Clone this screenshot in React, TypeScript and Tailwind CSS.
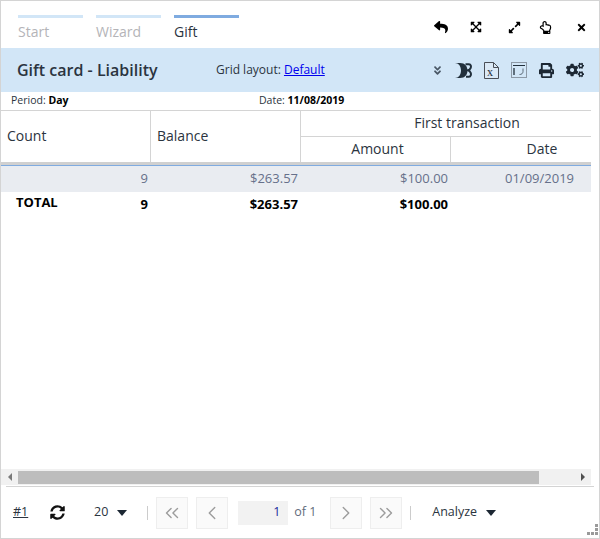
import {
  FaAngleDoubleDown,
  FaCogs,
  FaExpandAlt,
  FaExpandArrowsAlt,
  FaPrint,
  FaRegHandPointUp,
  FaReply,
  FaSyncAlt,
  FaTimes,
} from "react-icons/fa";
import { ChevronLeft, ChevronRight, ChevronsLeft, ChevronsRight } from "lucide-react";

/* tabs on top */
const tabs = [
  { label: "Start", active: false },
  { label: "Wizard", active: false },
  { label: "Gift", active: true },
];

function D3Icon() {
  return (
    <svg width="17" height="15" viewBox="0 0 17 15" fill="none" className="text-[#22303c]">
      <path d="M0 0h5c5 0 7.500 3.500 7.500 7.500S10 15 5 15H0c3.500 0 6-3 6-7.500S3.500 0 0 0z" fill="currentColor" />
      <path d="M10.500 1.300h3.500c2 0 2.200 2.200 1.700 3.500-.4 1-1.200 2-2.700 2.500 1.500.5 2.300 1.500 2.700 2.500.5 1.300.3 4-1.700 4h-3" stroke="currentColor" strokeWidth="2" />
    </svg>
  );
}

function ExcelIcon() {
  return (
    <svg width="15" height="17" viewBox="0 0 15 17" fill="none">
      <path d="M.5.5h9l5 5v11H.5z" fill="#dbe9f6" stroke="#4a4f57" />
      <path d="M9.500.5v5h5" stroke="#4a4f57" />
      <text x="3" y="14" fontSize="12" fontFamily="Liberation Serif, serif" fill="#22303c">x</text>
    </svg>
  );
}

function LayoutIcon() {
  return (
    <svg width="16" height="16" viewBox="0 0 16 16" fill="none">
      <rect x=".5" y=".5" width="15" height="15" fill="#d2e6f7" stroke="#8d99a6" />
      <path d="M2 3.500h12" stroke="#22303c" />
      <path d="M3 6v7" stroke="#22303c" strokeWidth="1.300" />
      <path d="M12 6.500v3c0 2-1.500 3-3.500 3" stroke="#5d6b78" />
    </svg>
  );
}

function Caret() {
  return <div className="h-0 w-0 border-x-[5px] border-t-[6px] border-x-transparent border-t-[#1c2733]" />;
}

function PagerButton({ children }: { children: React.ReactNode }) {
  return (
    <button className="flex h-8 w-8 items-center justify-center border border-[#eeeeee] bg-[#fafafa] text-[#9c9c9c]">
      {children}
    </button>
  );
}

export default function App() {
  return (
    <div
      className="flex h-[539px] w-[600px] flex-col border border-[#d4d4d4] bg-white text-[#2b3440]"
      style={{ fontFamily: '"Open Sans", sans-serif' }}
    >
      {/* tabs and window buttons */}
      <div className="flex h-[47px] shrink-0 pl-[17px] pt-[14px]">
        <div className="flex gap-[13px]">
          {tabs.map((t) => (
            <div key={t.label} className="w-[65px]">
              <div className={t.active ? "h-[3px] bg-[#7fabe0]" : "h-[3px] bg-[#d2e6f7]"} />
              <div className={t.active ? "mt-[4px] text-sm leading-[19px]" : "mt-[4px] text-sm leading-[19px] text-[#b4b4b8]"}>
                {t.label}
              </div>
            </div>
          ))}
        </div>
        <div className="ml-auto mr-[12px] flex h-[24px] items-center text-black">
          <FaReply size={14} />
          <FaExpandArrowsAlt size={12} className="ml-[22px]" />
          <FaExpandAlt size={13} className="ml-[26px]" />
          <FaRegHandPointUp size={13} className="ml-[18px]" />
          <FaTimes size={11} className="ml-[24px]" />
        </div>
      </div>

      {/* header */}
      <div className="flex h-11 shrink-0 items-center bg-[#d2e6f7] pl-4 pr-[15px]">
        <div className="w-[199px] text-base font-semibold leading-5">Gift card - Liability</div>
        <div className="text-xs">
          Grid layout: <span className="text-[#0000ee] underline">Default</span>
        </div>
        <div className="ml-auto flex items-center gap-[12px]">
          <FaAngleDoubleDown size={11} className="text-[#4a5866]" />
          <D3Icon />
          <ExcelIcon />
          <LayoutIcon />
          <FaPrint size={15} className="text-[#1c2733]" />
          <FaCogs size={18} className="text-[#1c2733]" />
        </div>
      </div>

      {/* period */}
      <div className="flex h-[18px] shrink-0 items-center pl-[10px] text-[10.500px]">
        <div className="w-[248px]">
          Period: <span className="font-bold text-black">Day</span>
        </div>
        <div>
          Date: <span className="font-bold text-black">11/08/2019</span>
        </div>
      </div>

      {/* grid, the last column runs past the right edge */}
      <div className="mr-2 min-h-0 flex-1 overflow-hidden border-t border-[#d4d4d4] text-[13px]">
        <div className="w-[634px]">
          <div className="grid h-[54px] grid-cols-[150px_149px_150px_185px] grid-rows-[26px_25px] border-b-[3px] border-[#d0d0d0] text-sm">
            <div className="row-span-2 flex items-center border-r border-[#d4d4d4] pb-[2px] pl-[6px]">Count</div>
            <div className="row-span-2 flex items-center pb-[2px] pl-[6px]">Balance</div>
            <div className="col-span-2 flex items-center justify-center border-b border-l border-[#d4d4d4] pb-[2px] pr-[2px]">First transaction</div>
            <div className="flex items-center justify-center border-l border-[#d4d4d4] pb-[2px] pl-[4px]">Amount</div>
            <div className="flex items-center justify-center border-l border-[#d4d4d4] pb-[2px] pr-[2px]">Date</div>
          </div>
          <div className="grid h-[27px] grid-cols-[150px_149px_150px_185px] items-center border-t border-[#7fabe0] bg-[#e9ecf1] text-right text-[#66708a]">
            <div className="pr-[3px]">9</div>
            <div className="pr-[2px]">$263.57</div>
            <div className="pr-[2px]">$100.00</div>
            <div className="pr-[61px]">01/09/2019</div>
          </div>
          <div className="grid h-[26px] grid-cols-[150px_149px_150px_185px] items-center text-right font-bold text-black">
            <div className="flex justify-between pr-[3px]">
              <span className="-mt-[2px] pl-[15px]">TOTAL</span>
              <span>9</span>
            </div>
            <div className="pr-[2px]">$263.57</div>
            <div className="pr-[2px]">$100.00</div>
            <div />
          </div>
        </div>
      </div>

      {/* horizontal scrollbar */}
      <div className="mr-2 flex h-4 shrink-0 items-center bg-[#f1f1f1]">
        <div className="flex w-[17px] justify-center">
          <div className="h-0 w-0 border-y-4 border-r-4 border-y-transparent border-r-[#7a7a7a]" />
        </div>
        <div className="h-[13px] w-[521px] bg-[#bdbdbd]" />
        <div className="ml-auto flex w-[17px] justify-center">
          <div className="h-0 w-0 border-y-4 border-l-4 border-y-transparent border-l-[#505050]" />
        </div>
      </div>

      {/* footer */}
      <div className="relative mx-[5px] mt-px flex h-[52px] shrink-0 items-center border-t border-[#d4d4d4] pl-[7px] text-[12.500px]">
        <span className="w-[37px] underline">#1</span>
        <FaSyncAlt size={15} className="text-[#111]" />
        <span className="ml-[29px] mr-[9px]">20</span>
        <Caret />
        <div className="ml-[20px] mr-[8px] h-[14px] w-px bg-[#cccccc]" />
        <div className="flex items-center gap-2">
          <PagerButton><ChevronsLeft size={22} strokeWidth={1.500} /></PagerButton>
          <PagerButton><ChevronLeft size={22} strokeWidth={1.500} /></PagerButton>
        </div>
        <div className="ml-[10px] flex h-6 w-[50px] items-center justify-end bg-[#f2f2f2] pr-2 text-[#1a2a9c]">1</div>
        <span className="ml-[6px] w-[36px] text-[#5f6b7a]">of 1</span>
        <div className="flex items-center gap-2">
          <PagerButton><ChevronRight size={22} strokeWidth={1.500} /></PagerButton>
          <PagerButton><ChevronsRight size={22} strokeWidth={1.500} /></PagerButton>
        </div>
        <div className="ml-[8px] h-[14px] w-px bg-[#cccccc]" />
        <span className="ml-[21px] mr-[9px]">Analyze</span>
        <Caret />
        {/* resize grip */}
        <svg width="12" height="12" viewBox="0 0 12 12" className="absolute bottom-[2px] right-[-4px] text-[#9a9a9a]">
          <rect x="9" y="0" width="3" height="3" fill="currentColor" />
          <rect x="9" y="4" width="3" height="3" fill="currentColor" />
          <rect x="9" y="8" width="3" height="3" fill="currentColor" />
          <rect x="5" y="8" width="3" height="3" fill="currentColor" />
          <rect x="1" y="8" width="3" height="3" fill="currentColor" />
        </svg>
      </div>
    </div>
  );
}
